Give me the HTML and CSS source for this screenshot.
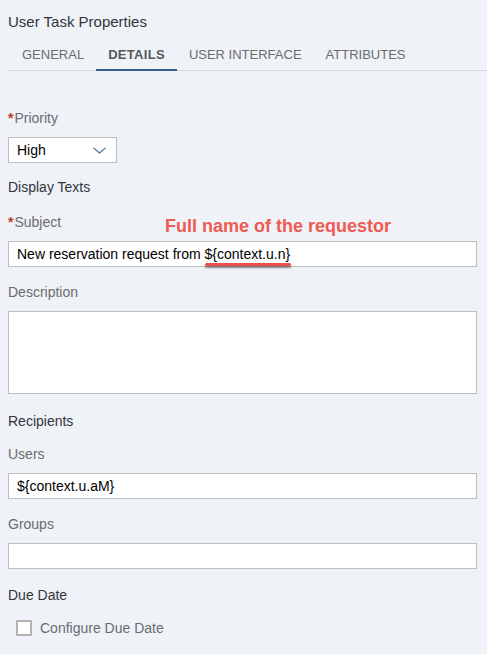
FILE: index.html
```
<!DOCTYPE html>
<html lang="en">
<head>
<meta charset="utf-8">
<title>User Task Properties</title>
<link rel="stylesheet" href="styles.css">
</head>
<body>
<div class="panel">
  <h1 class="title">User Task Properties</h1>
  <div class="tabbar">
    <div class="tab">GENERAL</div>
    <div class="tab active">DETAILS</div>
    <div class="tab">USER INTERFACE</div>
    <div class="tab">ATTRIBUTES</div>
  </div>
  <div class="form">
    <div class="group">
      <div class="label"><span class="req">*</span>Priority</div>
      <div class="select">
        <span>High</span>
        <svg class="chev" width="13" height="7" viewBox="0 0 13 7"><path d="M0.5 0.8 L6.5 6 L12.5 0.8" fill="none" stroke="#3f6690" stroke-width="1.1"/></svg>
      </div>
    </div>
    <div class="heading h-display">Display Texts</div>
    <div class="group g-subject">
      <div class="label"><span class="req">*</span>Subject</div>
      <div class="annot">Full name of the requestor</div>
      <div class="field">New reservation request from ${context.u.n}<span class="mark"></span></div>
    </div>
    <div class="group g-desc">
      <div class="label">Description</div>
      <div class="field area"></div>
    </div>
    <div class="heading h-recip">Recipients</div>
    <div class="group g-users">
      <div class="label">Users</div>
      <div class="field">${context.u.aM}</div>
    </div>
    <div class="group g-groups">
      <div class="label">Groups</div>
      <div class="field"></div>
    </div>
    <div class="heading h-due">Due Date</div>
    <div class="check-row">
      <span class="box"></span>
      <span class="check-label">Configure Due Date</span>
    </div>
  </div>
</div>
</body>
</html>
```
FILE: styles.css
```
html, body {
  margin: 0;
  padding: 0;
  background: #eff2f7;
}
body {
  font-family: "Liberation Sans", Arial, sans-serif;
  color: #32363a;
}
.panel {
  padding: 0 0 0 8px;
  display: flex;
  flex-direction: column;
}
.title {
  margin: 0;
  padding-top: 13px;
  font-size: 15px;
  line-height: 18px;
  font-weight: normal;
  color: #32363a;
  height: 18px;
}
.tabbar {
  margin-top: 9px;
  display: flex;
  padding-left: 2px;
  border-bottom: 1px solid #d4d8dd;
  height: 30px;
}
.tab {
  padding: 0 12px;
  height: 29px;
  line-height: 29px;
  font-size: 13px;
  color: #6a6d70;
  border-bottom: 2px solid transparent;
}
.tab.active {
  font-weight: bold;
  color: #555a5e;
  letter-spacing: 0.3px;
  border-bottom-color: #2f5f8e;
}
.form {
  display: flex;
  flex-direction: column;
  padding-top: 38px;
  padding-right: 10px;
}
.group {
  display: flex;
  flex-direction: column;
  gap: 10px;
  position: relative;
}
.label {
  font-size: 14px;
  line-height: 18px;
  height: 18px;
  color: #6a6d70;
}
.req {
  color: #c0392b;
  font-weight: bold;
  margin-right: 1px;
}
.heading {
  font-size: 14px;
  line-height: 18px;
  height: 18px;
  color: #32363a;
}
.select {
  box-sizing: border-box;
  width: 109px;
  height: 26px;
  background: #fff;
  border: 1px solid #bfbfbf;
  display: flex;
  align-items: center;
  justify-content: space-between;
  padding: 0 10px 0 8px;
  font-size: 14px;
  color: #000;
}
.chev { display: block; margin-top: 1px; }
.field {
  box-sizing: border-box;
  position: relative;
  height: 26px;
  background: #fff;
  border: 1px solid #bfbfbf;
  padding: 0 8px;
  font-size: 14px;
  line-height: 24px;
  color: #000;
}
.field.area { height: 83px; }
.h-display { margin-top: 15px; }
.g-subject { margin-top: 17px; }
.g-desc { margin-top: 16px; }
.h-recip { margin-top: 18px; }
.g-users { margin-top: 15px; }
.g-groups { margin-top: 16px; }
.h-due { margin-top: 17px; }
.annot {
  position: absolute;
  left: 157px;
  top: 3px;
  font-size: 18px;
  line-height: 20px;
  font-weight: bold;
  color: #ef5a52;
  white-space: nowrap;
}
.mark {
  position: absolute;
  left: 196px;
  top: 21px;
  width: 86px;
  height: 3px;
  border-radius: 2px;
  background: #e8504a;
  box-shadow: 0 2px 2px rgba(60, 40, 40, 0.55);
}
.check-row {
  margin-top: 16px;
  display: flex;
  align-items: center;
  gap: 8px;
  padding-left: 8px;
  height: 16px;
}
.box {
  box-sizing: border-box;
  width: 16px;
  height: 16px;
  border: 2px solid #b4b4b4;
  border-radius: 1px;
  background: #fff;
}
.check-label {
  font-size: 14px;
  line-height: 16px;
  color: #6a6d70;
}
```
